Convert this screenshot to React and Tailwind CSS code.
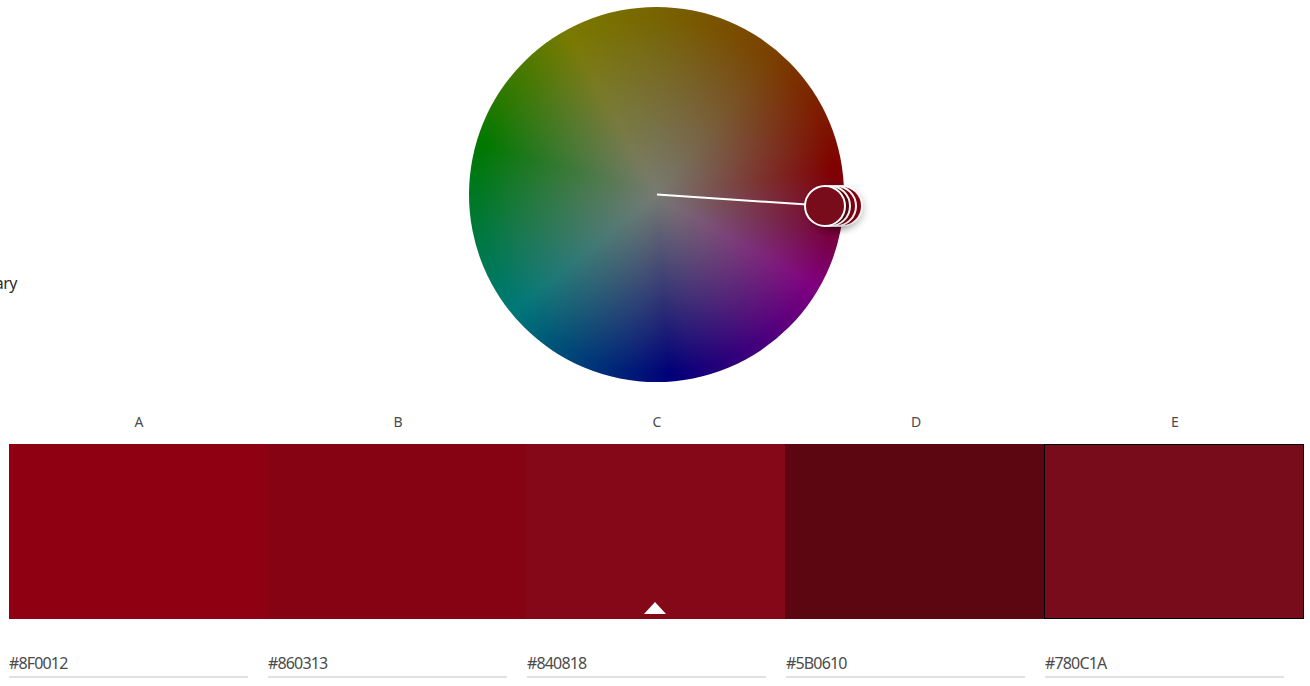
const swatches = [
  { label: "A", hex: "#8F0012", color: "bg-[#8f0012]" },
  { label: "B", hex: "#860313", color: "bg-[#860313]" },
  { label: "C", hex: "#840818", color: "bg-[#840818]", active: true },
  { label: "D", hex: "#5B0610", color: "bg-[#5b0610]" },
  { label: "E", hex: "#780C1A", color: "bg-[#780c1a]", outlined: true },
];

function Handle({ className }) {
  return (
    <div
      className={`absolute top-[178px] h-[42px] w-[42px] rounded-full border-2 border-white shadow-[2px_3px_7px_rgba(0,0,0,0.16)] ${className}`}
    />
  );
}

export default function App() {
  return (
    <div className="h-[686px] w-[1310px] overflow-hidden bg-white pl-[9px] pr-[6px] font-['Noto_Sans',sans-serif] text-[#4b4b4b]">
      <div className="grid h-[444px] grid-cols-[460px_375px_1fr] grid-rows-[7px_375px_1fr]">
        <div className="col-start-1 row-start-2 mr-[452px] mt-[265px] flex h-[22px] justify-end whitespace-nowrap text-[16px] leading-[22px] tracking-[-0.5px] text-[#2c2c2c]">
          Complementary
        </div>
        <div className="relative col-start-2 row-start-2 h-[375px] w-[375px] rounded-full bg-[radial-gradient(circle_closest-side,#777a72,#80808000_95%),conic-gradient(from_0deg,#786400_0deg,#7a4000_40deg,#800000_82deg,#78003c_103deg,#800080_120deg,#000078_176deg,#007878_231deg,#007800_286deg,#7a7a00_331deg,#786400_360deg)]">
          <svg className="absolute left-0 top-0" width="375" height="375">
            <line x1="188" y1="187.5" x2="338" y2="197.5" stroke="#fff" strokeWidth="2" />
          </svg>
          <Handle className="left-[352px] bg-[#8f0012]" />
          <Handle className="left-[346px] bg-[#860313]" />
          <Handle className="left-[340px] bg-[#5b0610]" />
          <Handle className="left-[335px] bg-[#780c1a]" />
        </div>
        <div className="col-span-3 row-start-3 grid grid-cols-5 pt-[30px]">
          {swatches.map((s) => (
            <div key={s.label} className="pl-px text-center text-[14px] leading-[20px]">{s.label}</div>
          ))}
        </div>
      </div>

      <div className="grid h-[175px] grid-cols-[259px_258px_259px_259px_260px]">
        {swatches.map((s) => (
          <div
            key={s.label}
            className={`relative ${s.color} ${s.outlined ? "border border-black" : ""}`}
          >
            {s.active && (
              <div className="absolute bottom-[5px] left-[118px] h-0 w-0 border-x-[11.5px] border-b-[12px] border-x-transparent border-b-white" />
            )}
          </div>
        ))}
      </div>

      <div className="grid grid-cols-5 pt-[33px]">
        {swatches.map((s) => (
          <div key={s.label} className="pr-5">
            <div className="h-[26px] border-b-2 border-[#e1e1e1] text-[16px] leading-[22px] tracking-[-0.85px] text-[#4b4b4b]">
              {s.hex}
            </div>
          </div>
        ))}
      </div>
    </div>
  );
}
